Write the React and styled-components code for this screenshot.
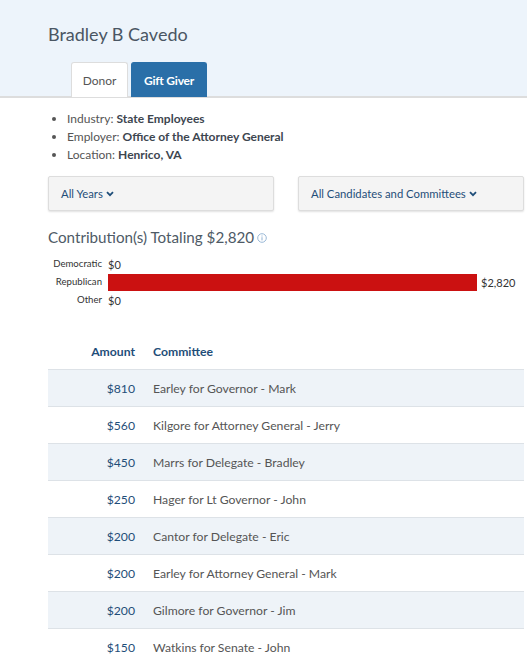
import React from "react"
import styled, { createGlobalStyle } from "styled-components"

const GlobalStyle = createGlobalStyle`
  body {
    margin: 0;
    background: #fff;
    font-family: Lato, "Liberation Sans", sans-serif;
    color: #555;
  }
`

const Page = styled.div`
  width: 530px;
  overflow: hidden;
`

const Header = styled.div`
  background: #edf4fb;
  padding: 24px 0 0 48px;
  border-bottom: 2px solid #ddd;
  margin-right: 3px;
`

const Name = styled.h1`
  margin: 0 0 16px 0;
  font-size: 18px;
  font-weight: 400;
  color: #4a5663;
  line-height: 22px;
  transform: translateY(-1px);
`

const Tabs = styled.div`
  display: flex;
  gap: 3px;
  padding-left: 23px;
  margin-bottom: -1px;
`

const Tab = styled.div`
  height: 35px;
  box-sizing: border-box;
  width: ${p => (p.active ? "76px" : "57px")};
  display: flex;
  align-items: center;
  justify-content: center;
  font-size: 12px;
  border-radius: 3px 3px 0 0;
  background: ${p => (p.active ? "#2a6fa8" : "#fff")};
  color: ${p => (p.active ? "#fff" : "#555")};
  border: 1px solid ${p => (p.active ? "#2a6fa8" : "#ddd")};
  border-bottom: none;
  font-weight: ${p => (p.active ? 700 : 400)};
  letter-spacing: ${p => (p.active ? "-0.2px" : "0")};
`

const Body = styled.div`
  padding: 12px 6px 0 48px;
`

const InfoList = styled.ul`
  margin: 0;
  padding-left: 19px;
  font-size: 12px;
  line-height: 18px;
  color: #555;

  b {
    color: #3d4650;
  }
`

const Filters = styled.div`
  display: flex;
  justify-content: space-between;
  margin-top: 12px;
`

const Select = styled.div`
  width: 226px;
  height: 35px;
  box-sizing: border-box;
  background: #f4f4f4;
  border: 1px solid #ddd;
  box-shadow: 0 1px 2px rgba(0, 0, 0, 0.12);
  border-radius: 2px;
  display: flex;
  align-items: center;
  padding-left: 12px;
  font-size: 11.3px;
  color: #1f4e79;
`

const Chevron = () => (
  <svg width="8" height="6" viewBox="0 0 8 6" style={{ marginLeft: 3, marginTop: 1 }}>
    <path d="M1 1.2 L4 4.2 L7 1.2" stroke="#1f4e79" strokeWidth="1.8" fill="none" />
  </svg>
)

const Total = styled.h2`
  margin: 16px 0 8px 0;
  font-size: 15.2px;
  line-height: 20px;
  font-weight: 400;
  color: #4e5a66;
  display: flex;
  align-items: center;
`

const Info = () => (
  <svg width="10" height="10" viewBox="0 0 10 10" style={{ marginLeft: 3, marginTop: 2 }}>
    <circle cx="5" cy="5" r="4.3" stroke="#8fb1d3" strokeWidth="0.9" fill="none" />
    <rect x="4.5" y="4.2" width="1" height="3.2" fill="#8fb1d3" />
    <rect x="4.5" y="2.5" width="1" height="1" fill="#8fb1d3" />
  </svg>
)

const Chart = styled.div`
  display: grid;
  grid-template-columns: 54px 1fr;
  column-gap: 6px;
  font-size: 9.6px;
  color: #333;
`

const Label = styled.div`
  text-align: right;
  height: 18px;
  line-height: 18px;
`

const BarCell = styled.div`
  display: flex;
  align-items: center;
  height: 18px;
  font-size: 11px;
`

const Bar = styled.div`
  height: 17px;
  background: #cb1111;
  margin-right: 4px;
`

const Table = styled.table`
  width: 476px;
  margin-top: 24px;
  border-collapse: collapse;
  font-size: 12.2px;
`

const Th = styled.th`
  font-weight: 700;
  color: #1f4e79;
  height: 36px;
  text-align: ${p => (p.right ? "right" : "left")};
  width: ${p => (p.right ? "87px" : "auto")};
  padding: 0 0 0 ${p => (p.right ? "0" : "18px")};
`

const Row = styled.tr`
  background: ${p => (p.shade ? "#eef3f8" : "#fff")};
  border-top: 1px solid #dde2e7;
  height: 37px;
`

const Amount = styled.td`
  text-align: right;
  color: #1f4e79;
  padding: 0;
`

const Committee = styled.td`
  padding-left: 18px;
  color: #555;
`

const rows = [
  ["$810", "Earley for Governor - Mark"],
  ["$560", "Kilgore for Attorney General - Jerry"],
  ["$450", "Marrs for Delegate - Bradley"],
  ["$250", "Hager for Lt Governor - John"],
  ["$200", "Cantor for Delegate - Eric"],
  ["$200", "Earley for Attorney General - Mark"],
  ["$200", "Gilmore for Governor - Jim"],
  ["$150", "Watkins for Senate - John"],
]

const App = () => (
  <Page>
    <GlobalStyle />
    <Header>
      <Name>Bradley B Cavedo</Name>
      <Tabs>
        <Tab>Donor</Tab>
        <Tab active>Gift Giver</Tab>
      </Tabs>
    </Header>
    <Body>
      <InfoList>
        <li>Industry: <b>State Employees</b></li>
        <li>Employer: <b>Office of the Attorney General</b></li>
        <li>Location: <b>Henrico, VA</b></li>
      </InfoList>
      <Filters>
        <Select>All Years<Chevron /></Select>
        <Select>All Candidates and Committees<Chevron /></Select>
      </Filters>
      <Total>Contribution(s) Totaling $2,820<Info /></Total>
      <Chart>
        <Label>Democratic</Label>
        <BarCell>$0</BarCell>
        <Label>Republican</Label>
        <BarCell><Bar style={{ width: 369 }} />$2,820</BarCell>
        <Label>Other</Label>
        <BarCell>$0</BarCell>
      </Chart>
      <Table>
        <thead>
          <tr>
            <Th right>Amount</Th>
            <Th>Committee</Th>
          </tr>
        </thead>
        <tbody>
          {rows.map(([amt, name], i) => (
            <Row key={i} shade={i % 2 === 0}>
              <Amount>{amt}</Amount>
              <Committee>{name}</Committee>
            </Row>
          ))}
        </tbody>
      </Table>
    </Body>
  </Page>
)

export default App
